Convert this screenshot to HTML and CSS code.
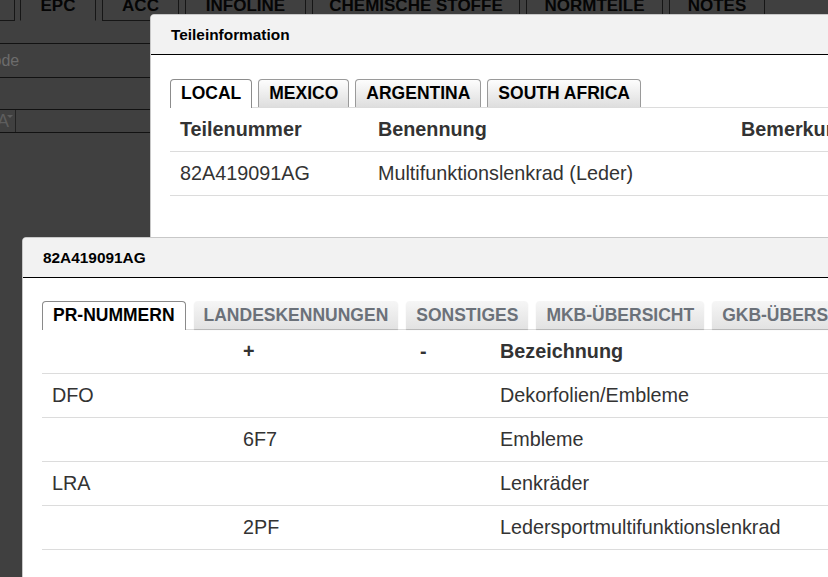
FILE: index.html
```
<!DOCTYPE html>
<html>
<head>
  <title>Teileinformation</title>
  <link rel="stylesheet" href="styles.css">
</head>
<body>
<div class="page">
  <ul class="page-tabs">
    <li class="page-tab page-tab-first"></li>
    <li class="page-tab active">EPC</li>
    <li class="page-tab">ACC</li>
    <li class="page-tab">INFOLINE</li>
    <li class="page-tab">CHEMISCHE STOFFE</li>
    <li class="page-tab">NORMTEILE</li>
    <li class="page-tab">NOTES</li>
  </ul>
  <div class="field-row row-a"></div>
  <div class="field-row row-b"><span class="placeholder">Code</span></div>
  <div class="field-row row-c"></div>
  <div class="field-row row-d"><span class="select-box">A<span class="caret"></span></span></div>
</div>

<!-- Teileinformation -->
<div class="dialog dialog-parts">
  <div class="dialog-head">Teileinformation</div>
  <div class="dialog-body">
    <ul class="tabs">
      <li class="tab active">LOCAL</li>
      <li class="tab">MEXICO</li>
      <li class="tab">ARGENTINA</li>
      <li class="tab">SOUTH AFRICA</li>
    </ul>
    <table class="grid grid-parts">
      <thead>
      <tr>
        <th class="c-nr">Teilenummer</th>
        <th class="c-name">Benennung</th>
        <th>Bemerkung</th>
      </tr>
      </thead>
      <tbody>
      <tr>
        <td>82A419091AG</td>
        <td>Multifunktionslenkrad (Leder)</td>
        <td></td>
      </tr>
      </tbody>
    </table>
  </div>
</div>

<!-- PR-Nummern zum Teil -->
<div class="dialog dialog-pr">
  <div class="dialog-head">82A419091AG</div>
  <div class="dialog-body">
    <ul class="tabs tabs-flat">
      <li class="tab active">PR-NUMMERN</li>
      <li class="tab">LANDESKENNUNGEN</li>
      <li class="tab">SONSTIGES</li>
      <li class="tab">MKB-ÜBERSICHT</li>
      <li class="tab">GKB-ÜBERSICHT</li>
    </ul>
    <table class="grid grid-pr">
      <thead>
      <tr>
        <th class="c-fam"></th>
        <th class="c-plus">+</th>
        <th class="c-minus">-</th>
        <th>Bezeichnung</th>
      </tr>
      </thead>
      <tbody>
      <tr><td>DFO</td><td></td><td></td><td>Dekorfolien/Embleme</td></tr>
      <tr><td></td><td>6F7</td><td></td><td>Embleme</td></tr>
      <tr><td>LRA</td><td></td><td></td><td>Lenkräder</td></tr>
      <tr><td></td><td>2PF</td><td></td><td>Ledersportmultifunktionslenkrad</td></tr>
      </tbody>
    </table>
  </div>
</div>
</body>
</html>
```

FILE: styles.css
```
html, body {
  margin: 0;
  height: 100%;
}

body {
  font-family: "Liberation Sans", Arial, sans-serif;
  background-color: #404040;
  overflow: hidden;
  position: relative;
}

ul {
  list-style: none;
  margin: 0;
  padding: 0;
}

/* Hintergrundseite (abgedunkelt) */
.page-tabs {
  display: flex;
  gap: 6px;
  margin-top: -14px;
  height: 35px;
}

.page-tab {
  box-sizing: border-box;
  height: 35px;
  padding: 9px 0 0;
  border: 1px solid #161616;
  text-align: center;
  font-size: 17px;
  font-weight: bold;
  line-height: 20px;
  color: #050505;
}

.page-tab-first { width: 15px; border-left: none; }
.page-tab.active { width: 76px; border-bottom-color: transparent; margin-left: -1px; }
.page-tab:nth-child(3) { width: 77px; }
.page-tab:nth-child(4) { width: 121px; }
.page-tab:nth-child(5) { width: 208px; }
.page-tab:nth-child(6) { width: 137px; }
.page-tab:nth-child(7) { width: 96px; }

.field-row {
  border-bottom: 1px solid #121212;
}

.row-a { height: 22px; }
.row-b { height: 33px; line-height: 33px; }
.row-c { height: 31px; }
.row-d { height: 22px; }

.placeholder {
  display: block;
  text-indent: -19px;
  font-size: 16px;
  color: #6c6c6c;
}

.select-box {
  display: block;
  width: 15px;
  height: 22px;
  border-right: 1px solid #222;
  overflow: hidden;
  text-indent: -3px;
  font-size: 18px;
  line-height: 23px;
  color: #5d5d5d;
  position: relative;
}

.caret {
  position: absolute;
  right: 2px;
  top: 5px;
  border-left: 3px solid transparent;
  border-right: 3px solid transparent;
  border-top: 3px solid #5d5d5d;
}

/* Dialoge */
.dialog {
  position: absolute;
  background-color: #fff;
  border: 1px solid #c8c8c8;
  border-radius: 4px;
  overflow: hidden;
}

.dialog-parts {
  left: 150px;
  top: 14px;
  width: 760px;
  height: 640px;
}

.dialog-pr {
  left: 22px;
  top: 237px;
  width: 900px;
  height: 420px;
}

.dialog-head {
  height: 39px;
  padding-left: 20px;
  background-color: #f2f2f2;
  border-bottom: 1px solid #000;
  font-size: 15.4px;
  font-weight: bold;
  line-height: 39px;
  color: #000;
}

.dialog-body {
  padding: 24px 19px 0;
}

.dialog-pr .dialog-body {
  padding-top: 23px;
}

/* Reiter */
.tabs {
  display: flex;
  align-items: flex-end;
  gap: 6px;
  height: 28px;
  border-bottom: 1px solid #dcdcdc;
}

.tab {
  box-sizing: border-box;
  height: 28px;
  padding: 0 10px;
  border: 1px solid #9a9a9a;
  border-bottom: none;
  border-radius: 4px 4px 0 0;
  background: linear-gradient(#fdfdfd, #dedede);
  font-size: 17.5px;
  font-weight: bold;
  line-height: 27px;
  color: #000;
}

.tab.active {
  height: 29px;
  margin-bottom: -1px;
  background: #fff;
  border-color: #8c8c8c;
}

.tabs-flat {
  gap: 8px;
}

.tabs-flat .tab {
  border: none;
  padding: 1px 10px 0;
  background: linear-gradient(#f6f6f6, #e2e2e2);
  box-shadow: 0 1px 1px rgba(0, 0, 0, 0.18);
  color: #6b7179;
}

.tabs-flat .tab.active {
  border: 1px solid #8a8a8a;
  border-bottom: none;
  padding: 0 10px;
  background: #fff;
  box-shadow: none;
  color: #000;
}

/* Tabellen */
.grid {
  border-collapse: collapse;
  table-layout: fixed;
  font-size: 19.8px;
  color: #333;
}

.grid th, .grid td {
  height: 43px;
  padding: 0 10px;
  border-bottom: 1px solid #dcdcdc;
  text-align: left;
  white-space: nowrap;
  overflow: hidden;
}

.grid th {
  font-weight: bold;
}

.grid-parts { width: 800px; }
.grid-parts .c-nr { width: 178px; }
.grid-parts .c-name { width: 343px; }

.grid-pr { width: 900px; }
.grid-pr .c-fam { width: 171px; }
.grid-pr .c-plus { width: 157px; }
.grid-pr .c-minus { width: 60px; }
```
